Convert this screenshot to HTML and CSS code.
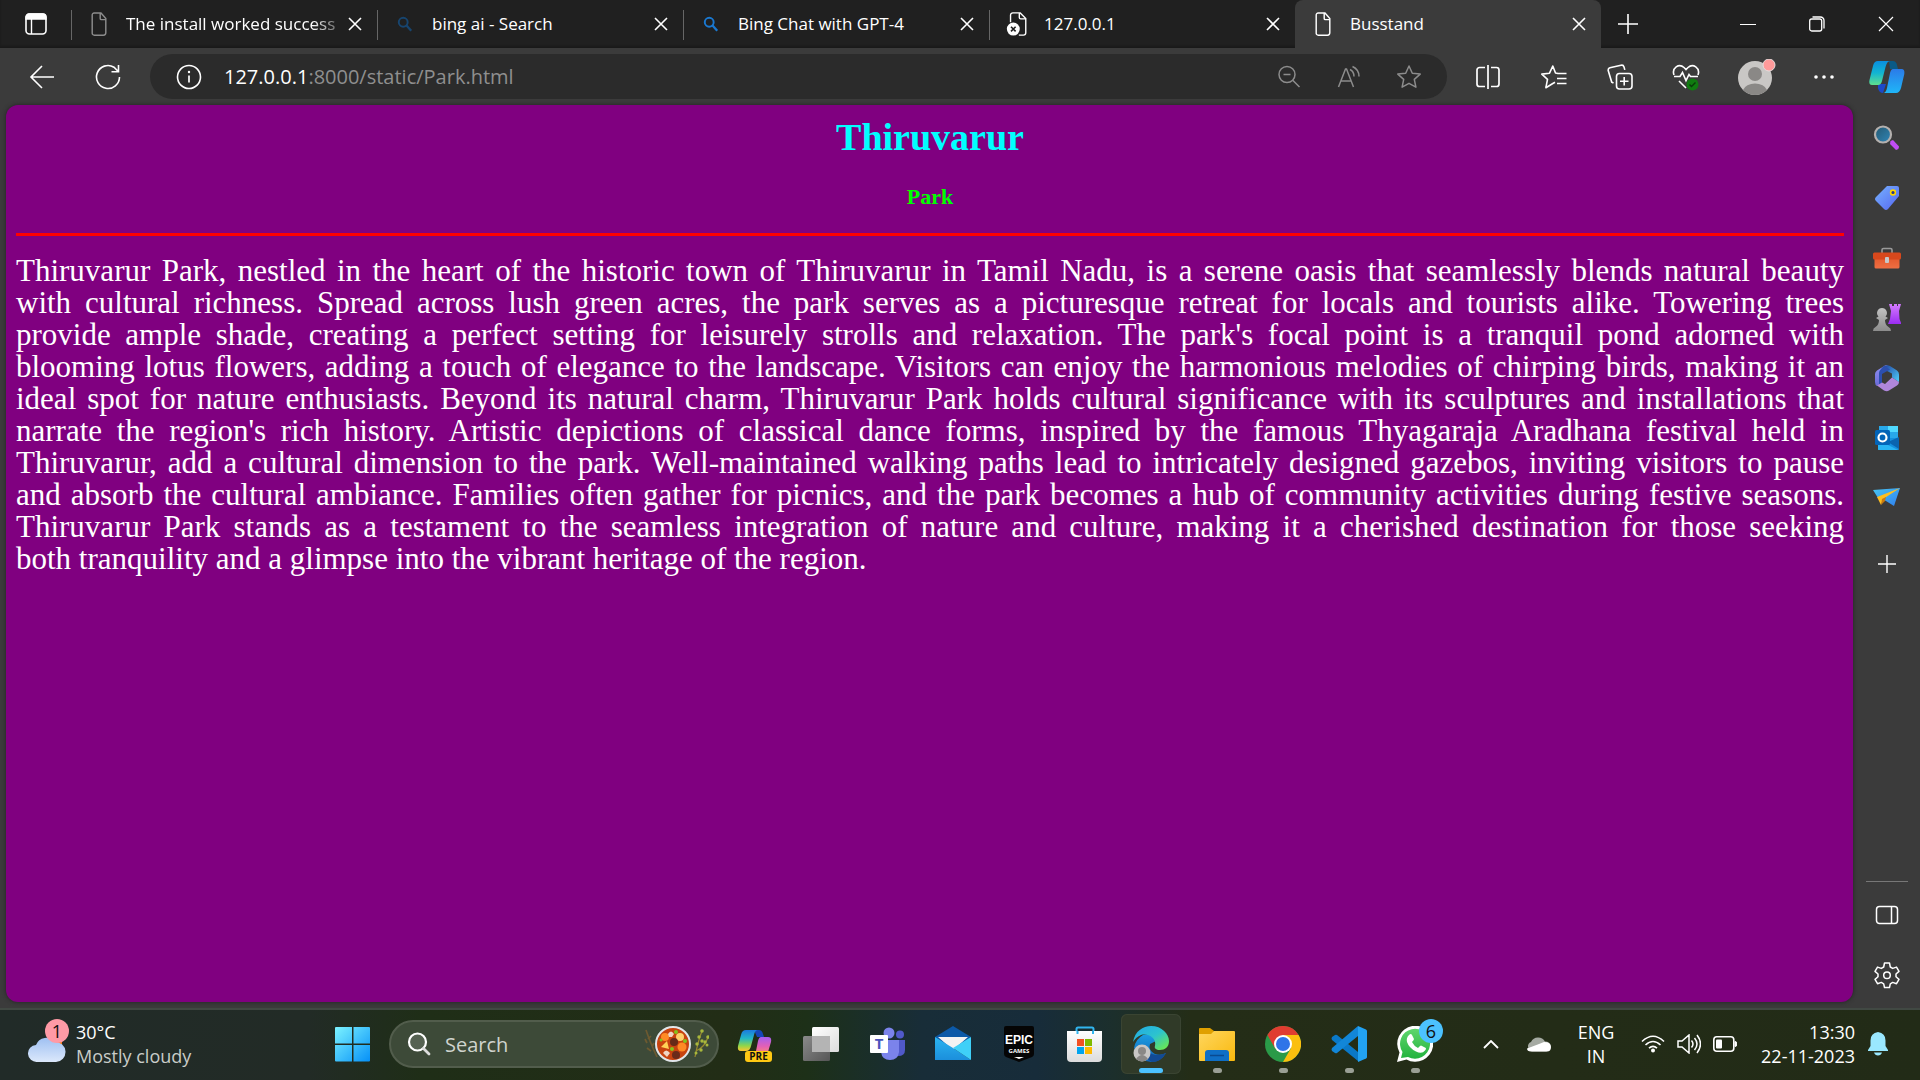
FILE: index.html
```html
<!DOCTYPE html>
<html lang="en">
<head>
<meta charset="utf-8">
<title>Busstand</title>
<link rel="stylesheet" href="styles.css">
</head>
<body>
<svg class="defs" aria-hidden="true">
  <defs>
    <linearGradient id="cpA" x1="0" y1="0" x2="0" y2="1"><stop offset="0" stop-color="#0a8ee0"/><stop offset=".5" stop-color="#12b5d2"/><stop offset="1" stop-color="#5fe08e"/></linearGradient>
    <linearGradient id="cpB" x1="0" y1="0" x2="0" y2="1"><stop offset="0" stop-color="#2b7be8"/><stop offset="1" stop-color="#1fb6f8"/></linearGradient>
    <linearGradient id="cpC" x1="0" y1="0" x2="0" y2="1"><stop offset="0" stop-color="#a45ef0"/><stop offset=".5" stop-color="#e460b4"/><stop offset="1" stop-color="#ff9a62"/></linearGradient>
    <linearGradient id="cpD" x1="0" y1="0" x2="0" y2="1"><stop offset="0" stop-color="#1b7ae0"/><stop offset=".4" stop-color="#22b7c6"/><stop offset=".75" stop-color="#8fd64a"/><stop offset="1" stop-color="#ffc52e"/></linearGradient>
    <linearGradient id="lens" x1="0" y1="0" x2="1" y2="1"><stop offset="0" stop-color="#245870"/><stop offset="1" stop-color="#2f86b8"/></linearGradient>
    <linearGradient id="tag" x1="0" y1="0" x2="1" y2="1"><stop offset="0" stop-color="#76b2ff"/><stop offset="1" stop-color="#5566f0"/></linearGradient>
    <linearGradient id="rook" x1="0" y1="0" x2="0" y2="1"><stop offset="0" stop-color="#d57cff"/><stop offset="1" stop-color="#9a2cf2"/></linearGradient>
    <linearGradient id="pawn" x1="0" y1="0" x2="0" y2="1"><stop offset="0" stop-color="#c2c2c2"/><stop offset="1" stop-color="#8c8c8c"/></linearGradient>
    <linearGradient id="box" x1="0" y1="0" x2="0" y2="1"><stop offset="0" stop-color="#e4562a"/><stop offset="1" stop-color="#ef6f43"/></linearGradient>
    <linearGradient id="m1" x1="0" y1="0" x2="0" y2="1"><stop offset="0" stop-color="#8f8ff0"/><stop offset="1" stop-color="#6a6ad8"/></linearGradient>
    <linearGradient id="m2" x1="0" y1="0" x2="1" y2="1"><stop offset="0" stop-color="#2348a4"/><stop offset="1" stop-color="#4fd0fb"/></linearGradient>
    <linearGradient id="plane" x1="0" y1="0" x2="1" y2="1"><stop offset="0" stop-color="#48c6f2"/><stop offset="1" stop-color="#2f7ff0"/></linearGradient>
    <linearGradient id="win" x1="0" y1="0" x2="1" y2="1"><stop offset="0" stop-color="#7cf3ff"/><stop offset="1" stop-color="#0590f8"/></linearGradient>
    <linearGradient id="cloud" x1="0" y1="0" x2="0" y2="1"><stop offset="0" stop-color="#9fc0f2"/><stop offset="1" stop-color="#dbe8fb"/></linearGradient>
    <linearGradient id="tv1" x1="0" y1="0" x2="1" y2="1"><stop offset="0" stop-color="#ffffff"/><stop offset="1" stop-color="#dcdcdc"/></linearGradient>
    <linearGradient id="tv2" x1="0" y1="0" x2="1" y2="1"><stop offset="0" stop-color="#8a8a8a"/><stop offset="1" stop-color="#565656"/></linearGradient>
    <linearGradient id="mail" x1="0" y1="0" x2="0" y2="1"><stop offset="0" stop-color="#2bb4f0"/><stop offset="1" stop-color="#1b8fdc"/></linearGradient>
    <linearGradient id="store" x1="0" y1="0" x2="0" y2="1"><stop offset="0" stop-color="#ffffff"/><stop offset="1" stop-color="#dcdcdc"/></linearGradient>
    <linearGradient id="edge1" x1="0" y1="0" x2="1" y2="1"><stop offset="0" stop-color="#22a8e6"/><stop offset=".5" stop-color="#2cc3cf"/><stop offset="1" stop-color="#74f03c"/></linearGradient>
    <linearGradient id="edge2" x1="0" y1="0" x2="0" y2="1"><stop offset="0" stop-color="#1b9de2"/><stop offset="1" stop-color="#1060b4"/></linearGradient>
    <linearGradient id="fold" x1="0" y1="0" x2="1" y2="1"><stop offset="0" stop-color="#ffd65e"/><stop offset="1" stop-color="#f9b90e"/></linearGradient>
    <linearGradient id="wa" x1="0" y1="0" x2="0" y2="1"><stop offset="0" stop-color="#5fd66c"/><stop offset="1" stop-color="#22b33e"/></linearGradient>
    <symbol id="x" viewBox="0 0 14 14"><path d="M1 1l12 12M13 1L1 13" fill="none" stroke="currentColor" stroke-width="1.6"/></symbol>
    <symbol id="doc" viewBox="0 0 20 30"><path d="M4 1.200h8.500L18.500 8v18a3 3 0 0 1-3 3H4a2.500 2.500 0 0 1-2.500-2.500v-22.500A2.500 2.500 0 0 1 4 1.200zM11.500 1.500V8a1.500 1.500 0 0 0 1.500 1.500h5" fill="none" stroke="currentColor" stroke-width="1.800"/></symbol>
    <symbol id="find" viewBox="0 0 18 18"><circle cx="7" cy="7" r="5" fill="none" stroke="currentColor" stroke-width="2.200"/><path d="M10.500 10.500l5.500 6" stroke="currentColor" stroke-width="2.600"/></symbol>
    <symbol id="plus" viewBox="0 0 22 22"><path d="M11 1v20M1 11h20" stroke="currentColor" stroke-width="1.600"/></symbol>
  </defs>
</svg>

<nav class="tabs" aria-label="Tabs">
  <button class="workspace" aria-label="Tab actions"><svg width="22" height="22" viewBox="0 0 22 22"><rect x="1" y="1" width="20" height="20" rx="3.500" fill="none" stroke="#fff" stroke-width="1.600"/><path d="M1 6V4a3 3 0 0 1 3-3h14a3 3 0 0 1 3 3v2zM6.500 6v15" fill="#fff" stroke="#fff" stroke-width="1.400"/></svg></button>
  <div class="tab"><svg class="fav dim"><use href="#doc"/></svg><span class="title fade">The install worked success</span><button class="close" aria-label="Close tab"><svg><use href="#x"/></svg></button></div>
  <div class="tab"><svg class="fav lens navy"><use href="#find"/></svg><span class="title">bing ai - Search</span><button class="close" aria-label="Close tab"><svg><use href="#x"/></svg></button></div>
  <div class="tab"><svg class="fav lens blue"><use href="#find"/></svg><span class="title">Bing Chat with GPT-4</span><button class="close" aria-label="Close tab"><svg><use href="#x"/></svg></button></div>
  <div class="tab"><svg class="fav err" viewBox="0 0 24 26"><path d="M5 11V3.500A2.500 2.500 0 0 1 7.500 1h8L21.500 7v15.500A2.500 2.500 0 0 1 19 25h-5M14.500 1v5A1.500 1.500 0 0 0 16 7.500h5" fill="none" stroke="#fff" stroke-width="1.500"/><circle cx="8" cy="18.500" r="7" fill="#fff"/><path d="M5.500 16l5 5M10.500 16l-5 5" stroke="#202020" stroke-width="1.700"/></svg><span class="title">127.0.0.1</span><button class="close" aria-label="Close tab"><svg><use href="#x"/></svg></button></div>
  <div class="tab active"><svg class="fav"><use href="#doc"/></svg><span class="title">Busstand</span><button class="close" aria-label="Close tab"><svg><use href="#x"/></svg></button></div>
  <button class="newtab" aria-label="New tab"><svg width="22" height="22"><use href="#plus"/></svg></button>
  <div class="window">
    <button aria-label="Minimize"><svg width="16" height="16"><path d="M0 8.500h16" stroke="#fff"/></svg></button>
    <button aria-label="Restore"><svg width="16" height="16" viewBox="0 0 16 16"><rect x=".7" y="3" width="12" height="12" rx="2" fill="none" stroke="#fff" stroke-width="1.300"/><path d="M3.500 1h8A3.500 3.500 0 0 1 15 4.500v8" fill="none" stroke="#fff" stroke-width="1.300"/></svg></button>
    <button aria-label="Close"><svg width="16" height="16" viewBox="0 0 16 16"><path d="M1 1l14 14M15 1L1 15" stroke="#fff" stroke-width="1.200"/></svg></button>
  </div>
</nav>

<header class="toolbar">
  <button class="nav" aria-label="Back"><svg width="26" height="26" viewBox="0 0 26 26"><path d="M25 13H2M13 2L2 13l11 11" fill="none" stroke="#fff" stroke-width="1.600"/></svg></button>
  <button class="nav" aria-label="Refresh"><svg width="26" height="26" viewBox="0 0 26 26"><path d="M24.500 13A11.500 11.500 0 1 1 19 3.200l4 4M23.500 1v6.700h-7" fill="none" stroke="#fff" stroke-width="1.600"/></svg></button>
  <div class="address">
    <svg width="26" height="26" viewBox="0 0 26 26"><circle cx="13" cy="13" r="11.500" fill="none" stroke="#fff" stroke-width="1.600"/><path d="M13 11.500v7" stroke="#fff" stroke-width="1.700"/><circle cx="13" cy="8" r="1.200" fill="#fff"/></svg>
    <a class="url" href="#"><b>127.0.0.1</b>:8000/static/Park.html</a>
    <button aria-label="Zoom"><svg width="24" height="24" viewBox="0 0 24 24"><circle cx="10" cy="9.500" r="8" fill="none" stroke="#8c8c8c" stroke-width="1.500"/><path d="M6.500 9.500h7M15.500 15l7 7" stroke="#8c8c8c" stroke-width="1.500"/></svg></button>
    <button aria-label="Read aloud"><svg width="24" height="24" viewBox="0 0 24 24"><path d="M1.500 22L8.500 4h1l7 18M4 16h10M13 4.500q4 2 4 7M15.500 1.500q6.500 3 6.500 10" fill="none" stroke="#8c8c8c" stroke-width="1.500"/></svg></button>
    <button aria-label="Add to favorites"><svg width="26" height="26" viewBox="0 0 26 26"><path d="M13 2l3.300 7.200 7.900.9-5.900 5.300 1.600 7.800-6.900-3.900-6.900 3.900 1.600-7.800L1.800 10.100l7.900-.9z" fill="none" stroke="#8c8c8c" stroke-width="1.500" stroke-linejoin="round"/></svg></button>
  </div>
  <div class="tools">
    <button aria-label="Split screen"><svg width="26" height="26" viewBox="0 0 26 26"><path d="M10 3.500H4.500a2.500 2.500 0 0 0-2.500 2.500v14a2.500 2.500 0 0 0 2.500 2.500H10M16 3.500h5.500A2.500 2.500 0 0 1 24 6v14a2.500 2.500 0 0 1-2.500 2.500H16M13 1v24" fill="none" stroke="#fff" stroke-width="1.700"/></svg></button>
    <button aria-label="Favorites"><svg width="26" height="26" viewBox="0 0 26 26"><path d="M17 9.500l-2.500-.5L11.800 2 8.500 9.200l-7.700.9 5.700 5.300-1.600 8.300 6.500-4 2.600-1.500M16 9.500h9.500M16 14.500h9.500M16 19.500h9.500" fill="none" stroke="#fff" stroke-width="1.600" stroke-linejoin="round"/></svg></button>
    <button aria-label="Collections"><svg width="26" height="26" viewBox="0 0 26 26"><rect x="9.500" y="9.500" width="15.500" height="15.500" rx="3" fill="none" stroke="#fff" stroke-width="1.600"/><path d="M17.200 13v8.500M13 17.200h8.500M6.500 19l-1.800-.9L1.200 6.500a2.500 2.500 0 0 1 1.700-2.700L14 1.200a2.500 2.500 0 0 1 3 1.700l.8 3" fill="none" stroke="#fff" stroke-width="1.600"/></svg></button>
    <button aria-label="Browser essentials"><svg width="28" height="28" viewBox="0 0 28 28"><path d="M2 12C-.5 5 7 0 12 4.500l2 2 2-2C21 0 28.500 5 26 12M2 13.500h6l2.500-4 3.500 8 3-6 1.500 2H26M7 18l7 7" fill="none" stroke="#fff" stroke-width="1.600"/><circle cx="20.500" cy="21.500" r="6" fill="#107c10"/><path d="M17.500 21.500l2 2 4-4" fill="none" stroke="#0a3a0a" stroke-width="1.400"/></svg></button>
    <button class="avatar" aria-label="Profile"><svg width="38" height="36" viewBox="0 0 38 36"><circle cx="17" cy="19" r="17" fill="#c9c7c5"/><circle cx="17" cy="15" r="7" fill="#8a8886"/><path d="M5 31a12.500 9 0 0 1 24 0 17 17 0 0 1-24 0z" fill="#8a8886"/><circle cx="31" cy="6" r="6" fill="#ff9a9a" stroke="#e8dcdc" stroke-width="1"/></svg></button>
    <button class="more" aria-label="Settings and more"><svg width="20" height="6"><circle cx="2" cy="3" r="1.800" fill="#fff"/><circle cx="10" cy="3" r="1.800" fill="#fff"/><circle cx="18" cy="3" r="1.800" fill="#fff"/></svg></button>
    <button aria-label="Copilot"><svg width="36" height="34" viewBox="0 0 36 34"><path d="M9 24h8l-3 9q-4 0-5-5z" fill="#1c49c8"/><path d="M20 1h4q3 0 4 4l1 4h-8z" fill="#0a5a86"/><path d="M9 1h12q-3 0-4.500 6L13 21q-1 4-4 4H3q-3.500 0-2.500-5L4 6Q5 1 9 1z" fill="url(#cpA)"/><path d="M24 9h8.500q3.500 0 2.800 5L32 28q-1.500 5-5 5H14q3 0 4-5l3-15q1-4 3-4z" fill="url(#cpB)"/></svg></button>
  </div>
</header>

<div class="middle">
  <main class="page">
    <h1>Thiruvarur</h1>
    <h3>Park</h3>
    <hr>
    <p>Thiruvarur Park, nestled in the heart of the historic town of Thiruvarur in Tamil Nadu, is a serene oasis that seamlessly blends natural beauty<br>
    with cultural richness. Spread across lush green acres, the park serves as a picturesque retreat for locals and tourists alike. Towering trees<br>
    provide ample shade, creating a perfect setting for leisurely strolls and relaxation. The park's focal point is a tranquil pond adorned with<br>
    blooming lotus flowers, adding a touch of elegance to the landscape. Visitors can enjoy the harmonious melodies of chirping birds, making it an<br>
    ideal spot for nature enthusiasts. Beyond its natural charm, Thiruvarur Park holds cultural significance with its sculptures and installations that<br>
    narrate the region's rich history. Artistic depictions of classical dance forms, inspired by the famous Thyagaraja Aradhana festival held in<br>
    Thiruvarur, add a cultural dimension to the park. Well-maintained walking paths lead to intricately designed gazebos, inviting visitors to pause<br>
    and absorb the cultural ambiance. Families often gather for picnics, and the park becomes a hub of community activities during festive seasons.<br>
    Thiruvarur Park stands as a testament to the seamless integration of nature and culture, making it a cherished destination for those seeking
    <span class="last">both tranquility and a glimpse into the vibrant heritage of the region.</span></p>
  </main>
  <aside class="sidebar" aria-label="Sidebar">
    <button aria-label="Search"><svg viewBox="0 0 28 28"><path d="M17.500 17l2.500-1 6 6.500q0 3-3 3.500L17 20z" fill="#c04df5"/><circle cx="10" cy="10.500" r="8" fill="url(#lens)" stroke="#b4b0ae" stroke-width="2.200"/></svg></button>
    <button aria-label="Shopping"><svg viewBox="0 0 28 28"><path d="M14 2h10q2 0 2 2v8L15 25q-2 2-4 0L3 17q-2-2 0-4z" fill="url(#tag)"/><circle cx="20" cy="8.500" r="2.400" fill="#28368a" stroke="#ffd400" stroke-width="1.600"/></svg></button>
    <button aria-label="Tools"><svg viewBox="0 0 28 28"><path d="M9 9V6q0-1.500 1.500-1.500h7Q19 4.500 19 6v3" fill="none" stroke="#9a9a9a" stroke-width="1.600"/><rect x="1.500" y="12" width="25" height="12.500" rx="1.500" fill="url(#box)"/><rect x="0" y="8.500" width="28" height="7" rx="1.500" fill="#d8481c"/><rect x="12" y="13" width="4" height="6" rx="1" fill="#c8c8c8"/></svg></button>
    <button aria-label="Games"><svg viewBox="0 0 28 28"><path d="M16 0h3v2h2V0h3v2h1V0h3l-2 7 .5 8 2 5H15l2-5 1-8z" fill="url(#rook)"/><path d="M9 4a5 5 0 0 1 3.500 8.500l2.500 1.500-3 2q0 5 3.500 7 2.500 1 2.500 4H0q0-3 2.500-4 3.500-2 3.500-7l-3-2 2.500-1.500A5 5 0 0 1 9 4z" fill="url(#pawn)"/></svg></button>
    <button aria-label="Microsoft 365"><svg viewBox="0 0 28 28"><path d="M15 1L11 4Q9 6 9 9v10l-5 3q-2-1-2-4v-8q0-2 2-3.500l8-5z" fill="url(#m1)"/><path d="M12 2q2-1.500 5 0l7 4.500q2 1.500 2 4V18l-7-4.500v-4L12 6z" fill="url(#m2)"/><path d="M11 1.500l6 4-8 4.500v9l-3 2V9q0-2 2-4z" fill="#2c4fae"/><path d="M4 21.500l5-3 3 1.500 7-6.500 7 4.500q0 2-2 3.500l-8 5q-2 1.500-5 0z" fill="#b087dc"/></svg></button>
    <button aria-label="Outlook"><svg viewBox="0 0 28 28"><path d="M6 2h19v13H6z" fill="#28a8ea"/><path d="M15 2h10v6H15z" fill="#50d9ff"/><path d="M5 14h21v11q0 1-1 1H5z" fill="#1490df"/><path d="M26 13v12L15 18z" fill="#0a64b0"/><path d="M5 16l20 10H6q-1 0-1-1z" fill="#28b4f4"/><rect x="2" y="6" width="15" height="15" rx="1.500" fill="#0364b8"/><circle cx="9.500" cy="13.500" r="4" fill="none" stroke="#fff" stroke-width="2.200"/></svg></button>
    <button aria-label="Drop"><svg viewBox="0 0 28 28"><path d="M0 6L27 4 21 22l-8-5-8-3z" fill="url(#plane)"/><path d="M27 4L4 13l4 8 2-6z" fill="#ffbf1f"/><path d="M8 21l1-6 4-2-1 4z" fill="#c87a10"/></svg></button>
    <button class="add" aria-label="Customize"><svg viewBox="0 0 28 28"><path d="M14 5v18M5 14h18" stroke="#fff" stroke-width="1.400"/></svg></button>
    <div class="rule"></div>
    <button aria-label="Hide sidebar"><svg viewBox="0 0 28 28"><rect x="3.500" y="5.500" width="21" height="17" rx="3" fill="none" stroke="#fff" stroke-width="1.500"/><path d="M18.500 5.500v17" stroke="#fff" stroke-width="1.500"/></svg></button>
    <button aria-label="Settings"><svg viewBox="0 0 28 28"><path d="M11.500 2h5l.8 4 2.400 1.400 3.800-1.300 2.500 4.300-3 2.600v2.800l3 2.600-2.500 4.300-3.800-1.300-2.400 1.400-.8 3.700h-5l-.8-3.700-2.400-1.400-3.800 1.300L2 18.400l3-2.600V13l-3-2.600 2.500-4.300 3.800 1.300L10.700 6z" fill="none" stroke="#fff" stroke-width="1.500" stroke-linejoin="round"/><circle cx="14" cy="14.300" r="3.300" fill="none" stroke="#fff" stroke-width="1.500"/></svg></button>
  </aside>
</div>

<footer class="taskbar">
  <button class="weather">
    <span class="wicon"><svg width="38" height="44" viewBox="0 0 38 44"><path d="M19 22h15v5H19z" fill="#f7780c"/><path d="M9 42a8.500 8.500 0 0 1-1-17A11 11 0 0 1 27 22a9 9 0 0 1 1 20z" fill="url(#cloud)"/></svg><span class="badge pink">1</span></span>
    <span class="wtext">30°C<small>Mostly cloudy</small></span>
  </button>
  <div class="apps">
    <button class="app" aria-label="Start"><svg viewBox="0 0 36 36"><path d="M0 2q0-1 1-1h16v16.500H0zM18.500 1H34q1 0 1 1v15.500H18.500zM0 19h17v16.500H1q-1 0-1-1zM18.500 19H35v15.500q0 1-1 1H18.500z" fill="url(#win)"/></svg></button>
    <label class="search"><svg width="24" height="24" viewBox="0 0 24 24"><circle cx="10.500" cy="10" r="8.500" fill="#ffffff22" stroke="#fff" stroke-width="2.200"/><path d="M16.500 16.500l5.500 5.500" stroke="#ddd" stroke-width="2.800" stroke-linecap="round"/></svg><input type="text" placeholder="Search" aria-label="Search"><svg width="66" height="38" viewBox="0 0 66 38"><path d="M3 5q4 12 11 27M5 14l3-3M4 18l-2-4M9 22l2-4M8 26l-4-3" fill="none" stroke="#6d5a30" stroke-width="1.700"/><path d="M52 32Q55 16 59 6M53 26q9-4 12-14" fill="none" stroke="#9a8a30" stroke-width="1.200"/><g fill="#a8b83c"><circle cx="59" cy="6" r="1.800"/><circle cx="56" cy="12" r="1.700"/><circle cx="59" cy="16" r="1.700"/><circle cx="54" cy="19" r="1.700"/><circle cx="65" cy="12" r="1.800"/><circle cx="62" cy="17" r="1.700"/><circle cx="64" cy="20" r="1.500"/><circle cx="58" cy="25" r="1.700"/><circle cx="53" cy="28" r="1.500"/></g><circle cx="30" cy="19" r="17" fill="#c8430f" stroke="#e2e6ea" stroke-width="2"/><circle cx="22" cy="12" r="4" fill="#ff8a24"/><circle cx="39" cy="22" r="4.500" fill="#ff8a24"/><circle cx="37" cy="12" r="4" fill="#ffcf6b"/><path d="M18 22l6-6 2 8z" fill="#ffd256"/><circle cx="31" cy="17" r="4" fill="#662a18"/><circle cx="33" cy="30" r="4" fill="#6a2a1a"/><path d="M25 9q3-5 6 0l-2 3h-3zM20 28q3-5 7 0l-3 4z" fill="#f0d5c4"/><g fill="#84c41c"><circle cx="33" cy="7" r="2"/><circle cx="42" cy="16" r="2"/><circle cx="29" cy="24" r="2"/><circle cx="18" cy="15" r="1.500"/></g></svg></label>
    <button class="app" aria-label="Copilot"><svg viewBox="0 0 36 36"><path d="M17 4h5q3 0 4 4l1 3h-7z" fill="#1646b8"/><path d="M9 4h12q-3 0-4 5l-3 11q-1 5-5 5H4q-4 0-3-5L4 9q1-5 5-5z" fill="url(#cpD)"/><path d="M24 11h7q4 0 3 5l-3 10q-1 4-4 4H14q4 0 5-5l2-10q1-4 3-4z" fill="url(#cpC)"/><rect x="8" y="25" width="27" height="11" rx="3" fill="#ffc913"/><text x="21.500" y="34" text-anchor="middle" class="pre">PRE</text></svg></button>
    <button class="app" aria-label="Task view"><svg viewBox="0 0 36 36"><rect x="9" y="1" width="27" height="25" rx="1.500" fill="url(#tv1)"/><rect x="0" y="10" width="27" height="25" rx="1.500" fill="url(#tv2)"/><path d="M9 10h18v16H9z" fill="#b4b4b4"/></svg></button>
    <button class="app" aria-label="Teams"><svg viewBox="0 0 36 36"><circle cx="20" cy="7" r="5.500" fill="#7b83eb"/><circle cx="31" cy="8.500" r="4" fill="#5059c9"/><path d="M26 14h10v10q0 6-7 6z" fill="#5059c9"/><path d="M12 14h18v12q-1 8-9 8t-9-8z" fill="#7b83eb"/><rect x="1" y="9" width="18" height="18" rx="1" fill="#fff"/><text x="10" y="23" text-anchor="middle" class="tee">T</text></svg></button>
    <button class="app" aria-label="Mail"><svg viewBox="0 0 36 36"><path d="M0 11L18 0l18 11-6 9H6z" fill="#0c59a8"/><path d="M3 11h30L18 24z" fill="#f3f3f3"/><path d="M0 11l18 11 18 12H0z" fill="url(#mail)"/><path d="M36 11L18 22l18 12z" fill="#3fd0f8"/></svg></button>
    <button class="app" aria-label="Epic Games"><svg viewBox="0 0 36 36"><path d="M5 0h26q2 0 2 2v26q0 2-2 3l-13 5-13-5q-2-1-2-3V2q0-2 2-2z" fill="#050505"/><text x="18" y="18" text-anchor="middle" class="epic">EPIC</text><text x="18" y="27" text-anchor="middle" class="games">GAMES</text><path d="M13 31h10l-5 2z" fill="#fff"/></svg></button>
    <button class="app" aria-label="Microsoft Store"><svg viewBox="0 0 36 36"><path d="M9.500 9V3q0-1.500 1.500-1.500h14Q26.500 1.500 26.500 3v6" fill="none" stroke="#31b5ef" stroke-width="2"/><path d="M0 5h35v27q0 4-4 4H4q-4 0-4-4z" fill="url(#store)"/><path d="M9.500 5h2v3h-2zM25 5h2v3h-2z" fill="#31b5ef"/><path d="M10 13h7v7h-7z" fill="#f25022"/><path d="M18 13h7v7h-7z" fill="#7fba00"/><path d="M10 21h7v7h-7z" fill="#00a4ef"/><path d="M18 21h7v7h-7z" fill="#ffb900"/></svg></button>
    <button class="app current" aria-label="Edge"><svg viewBox="0 0 36 36"><path d="M1 22A18 18 0 0 1 10 9q10-2 13 6l-6 3q-2 6 5 10 6 2 11-1-5 9-15 9T1 22z" fill="url(#edge2)"/><path d="M0 16C2 5 10 0 18 0c11 0 18 8 18 15 0 6-4 9-9 9-4 0-6-2-5-4C24 12 15 7 8 9q-5 2-8 7z" fill="url(#edge1)"/><path d="M13 20q1 8 10 9 6 0 10-2-5 9-14 9-8-3-6-16z" fill="#124a94"/><circle cx="9" cy="27" r="8.500" fill="#c9c7c5"/><circle cx="9" cy="25" r="4" fill="#8a8886"/><path d="M3 33q6-8 12 0-6 5-12 0z" fill="#8a8886"/></svg></button>
    <button class="app running" aria-label="File Explorer"><svg viewBox="0 0 36 36"><path d="M0 3q0-1 1-1h10l4 3-2 6H0z" fill="#e0a000"/><path d="M0 8h12l3-3h20q1 0 1 1v28q0 1-1 1H1q-1 0-1-1z" fill="url(#fold)"/><path d="M6 35v-8q0-3 3-3h18q3 0 3 3v8z" fill="#0f6fc6"/><path d="M11 29.500h14" stroke="#0a4a90" stroke-width="1.500"/></svg></button>
    <button class="app running" aria-label="Chrome"><svg viewBox="0 0 36 36"><circle cx="18" cy="18" r="18" fill="#2a9a48"/><path d="M2.400 9A18 18 0 0 1 33.600 9H18z" fill="#e03c30"/><path d="M2.400 9L10.200 22.500 18 9z" fill="#e03c30"/><path d="M33.600 9A18 18 0 0 1 18 36L25.800 22.500 18 9z" fill="#fbbf0e"/><circle cx="18" cy="18" r="9" fill="#fff"/><circle cx="18" cy="18" r="7" fill="#2f74e8"/></svg></button>
    <button class="app running" aria-label="Visual Studio Code"><svg viewBox="0 0 36 36"><path d="M1 11l3-2q1-.5 2 0l21 17v9L1 14q-1-1.500 0-3z" fill="#0a78c8"/><path d="M1 25l3 2q1 .5 2 0l21-17V0L1 22q-1 1.500 0 3z" fill="#1286d8"/><path d="M27 0l8 3.500q1 .5 1 1.500v26q0 1-1 1.500L27 36z" fill="#22a2f2"/></svg></button>
    <button class="app running" aria-label="WhatsApp"><svg viewBox="0 0 36 36"><path d="M0 36l2.500-9.500A18 18 0 1 1 9.500 33.500z" fill="#fff"/><path d="M4 32l1.500-6A15 15 0 1 1 11 31z" fill="url(#wa)"/><path d="M12 9q2-2 3 0l2 4q0 1-2 3 2 4 6 6l2-2q1-1 2 0l3 1.500q2 1 0 3-3 4-9 1Q12 22 10 16q-1-4 2-7z" fill="#fff"/></svg><span class="badge sky">6</span></button>
  </div>
  <div class="tray">
    <button class="slot" aria-label="Hidden icons"><svg width="16" height="9"><path d="M1 8l7-7 7 7" fill="none" stroke="#fff" stroke-width="1.800"/></svg></button>
    <button class="slot cloud" aria-label="OneDrive"><svg width="24" height="16" viewBox="0 0 24 16"><path d="M5 15.500A5 5 0 0 1 4 6 8 8 0 0 1 18 5.500a5 5 0 0 1 1 10z" fill="#a5aaa2"/><path d="M4 15.500q-4 0-4-3L12 8l5-2q7 0 7 5t-5 4.500z" fill="#fff"/></svg></button>
    <button class="lang">ENG<br>IN</button>
    <button class="quick" aria-label="Network, volume, battery">
      <svg width="24" height="18" viewBox="0 0 24 18"><path d="M1 6.500Q12-4 23 6.500M4.500 10q7.500-7 15 0M8 13.200q4-3.600 8 0" fill="none" stroke="#fff" stroke-width="1.600"/><circle cx="12" cy="15.500" r="2" fill="#fff"/></svg>
      <svg width="24" height="20" viewBox="0 0 24 20"><path d="M1 7h4l7-6v18l-7-6H1zM14.500 6.500q3 3.500 0 7M17.500 4q5 6 0 12M20 1q7 9 0 18" fill="none" stroke="#fff" stroke-width="1.500"/></svg>
      <svg width="24" height="16" viewBox="0 0 24 16"><rect x=".8" y=".8" width="20" height="14.400" rx="3" fill="none" stroke="#fff" stroke-width="1.600"/><rect x="3" y="3.500" width="6" height="9" rx="1" fill="#fff"/><path d="M22 5.500q2 0 2 2.500t-2 2.500z" fill="#fff" stroke="#fff"/></svg>
    </button>
    <button class="clock">13:30<br>22-11-2023</button>
    <button class="bell" aria-label="Notifications"><svg width="20" height="24" viewBox="0 0 20 24"><path d="M10 0q7.500 1 7.500 8.500V14l2.500 4v1H0v-1l2.500-4V8.500Q2.500 1 10 0zM6 20.500h8q-1 3-4 3t-4-3z" fill="#9ae8ff"/></svg></button>
  </div>
</footer>
</body>
</html>
```
FILE: styles.css
```css
* { box-sizing: border-box; }

body {
  margin: 0;
  min-height: 100vh;
  display: flex;
  flex-direction: column;
  background: #3b3b3b;
  color: #fff;
  font-family: "Open Sans", "Noto Sans", sans-serif;
  font-size: 17px;
}

button {
  display: flex;
  align-items: center;
  justify-content: center;
  padding: 0;
  border: 0;
  background: none;
  color: inherit;
  font: inherit;
}

svg { display: block; flex: none; }
.defs { position: absolute; width: 0; height: 0; }

/* Tab strip */
.tabs { display: flex; height: 48px; background: #202020; box-shadow: inset 0 -2px 2px #1a1a1a; }
.workspace { width: 71px; }
.tab {
  position: relative;
  flex: 0 1 306px;
  min-width: 0;
  display: flex;
  align-items: center;
  padding: 0 15px;
}
.tab::before {
  content: "";
  position: absolute;
  left: 0;
  top: 10px;
  bottom: 8px;
  width: 1px;
  background: #666;
}
.tab.active { background: #3b3b3b; border-radius: 8px 8px 0 0; }
.tab.active::before { display: none; }
.fav { width: 26px; height: 24px; margin-right: 14px; }
.fav.dim { color: #8c8c8c; }
.fav.lens { height: 16px; }
.navy { color: #17456f; }
.blue { color: #1a78d0; }
.title { flex: 1; min-width: 0; overflow: hidden; white-space: nowrap; line-height: 24px; }
.fade { mask-image: linear-gradient(90deg, #000 86%, #0003); }
.close { width: 14px; margin-left: 6px; }
.close svg { width: 14px; height: 14px; }
.newtab { width: 54px; }
.window { display: flex; margin-left: auto; }
.window button { width: 69px; }

/* Toolbar */
.toolbar { display: flex; align-items: center; height: 57px; padding-left: 9px; }
.nav { width: 66px; height: 45px; }
.address {
  flex: 1;
  display: flex;
  align-items: center;
  height: 45px;
  margin-left: 9px;
  padding: 0 8px 0 26px;
  border-radius: 23px;
  background: #2b2b2b;
}
.address button { width: 60px; height: 40px; }
.url { flex: 1; margin-left: 22px; color: #8f8f8f; font-size: 20px; line-height: 28px; text-decoration: none; }
.url b { color: #fff; font-weight: 400; }
.tools { display: flex; padding-left: 8px; }
.tools button { width: 66px; height: 45px; }
.tools .avatar { width: 75px; }
.tools .more { width: 60px; }

/* Web page and sidebar */
.middle { flex: 1; display: flex; }
.page {
  flex: 1;
  min-width: 0;
  margin: 0 0 6px 6px;
  padding: 10px 9px 10px 10px;
  border-radius: 12px;
  background: #800080;
  box-shadow: 0 0 4px #222;
  font-family: "Liberation Serif", serif;
}
h1, h3 { text-align: center; }
h1 { margin: 0 0 25px; color: #0ff; font-size: 38px; line-height: 44px; }
h3 { margin: 0 0 23px; color: #0f0; font-size: 22px; line-height: 26px; }
hr { height: 3px; margin: 0 0 19px; border: 0; background: #f00; }
p { margin: 0; font-size: 31px; line-height: 32px; text-align: justify; text-align-last: justify; }
.last { display: block; text-align-last: left; }

.sidebar { display: flex; flex-direction: column; align-items: center; width: 67px; padding-top: 3px; }
.sidebar button { width: 60px; height: 60px; }
.sidebar svg { width: 28px; height: 28px; }
.sidebar .add { margin-top: 6px; }
.rule { width: 42px; height: 1px; margin: auto 0 3px; background: #777; }
.sidebar button:last-child { margin-bottom: 3px; }

/* Taskbar */
.taskbar {
  display: flex;
  align-items: center;
  height: 72px;
  padding-bottom: 2px;
  border-top: 2px solid #414943;
  background: linear-gradient(90deg, #212b28 0, #222b26 16%, #1f2e17 22%, #222d16 38%, #1d3018 42%, #182d38 48%, #172c3a 54%, #1c2f2c 58%, #242d17 62%, #222b17 100%);
  font-size: 18px;
}
.weather { flex: none; width: 323px; justify-content: flex-start; padding-left: 28px; gap: 10px; text-align: left; }
.wicon { position: relative; padding-bottom: 4px; }
.badge {
  position: absolute;
  width: 24px;
  height: 24px;
  border-radius: 50%;
  color: #111;
  line-height: 24px;
  text-align: center;
}
.pink { top: -1px; right: -3px; background: #ff9aa6; }
.sky { top: 5px; right: 2px; background: #4cc2ff; }
.wtext, .lang, .clock { line-height: 24px; }
small { display: block; color: #c9cdc9; font-size: inherit; }
.apps { display: flex; align-items: center; gap: 6px; }
.app { position: relative; width: 60px; height: 60px; border-radius: 6px; }
.app svg { width: 36px; height: 36px; }
.search {
  display: flex;
  align-items: center;
  width: 330px;
  height: 48px;
  padding: 0 8px 0 16px;
  border: 2px solid #525d4c;
  border-radius: 24px;
  background: #3d4a38;
}
.search input {
  flex: 1;
  min-width: 0;
  margin-left: 10px;
  padding: 0 4px;
  border: 0;
  outline: 0;
  background: none;
  color: #fff;
  font: inherit;
  font-size: 20px;
}
.search input::placeholder { color: #d0d4ce; opacity: 1; }
.current { background: #303a28; box-shadow: inset 0 0 0 1px #3a4432; }
.current::after, .running::after {
  content: "";
  position: absolute;
  bottom: 1px;
  width: 9px;
  height: 5px;
  border-radius: 3px;
  background: #9a9f95;
}
.current::after { width: 24px; background: #4cc2ff; }
.pre { font: 700 10px "Open Sans", sans-serif; fill: #111; }
.tee { font: 700 15px "Open Sans", sans-serif; fill: #4b53bc; }
.epic { font: 700 12px "Liberation Sans Narrow", "Liberation Sans", sans-serif; fill: #fff; }
.games { font: 700 6px "Open Sans", sans-serif; fill: #fff; }

.tray { display: flex; align-items: center; margin-left: auto; padding-right: 32px; }
.slot { width: 48px; height: 60px; }
.lang { width: 66px; }
.quick { gap: 12px; margin: 0 12px; }
.clock { width: 106px; justify-content: flex-end; text-align: right; }
.bell { margin-left: 13px; }
```
